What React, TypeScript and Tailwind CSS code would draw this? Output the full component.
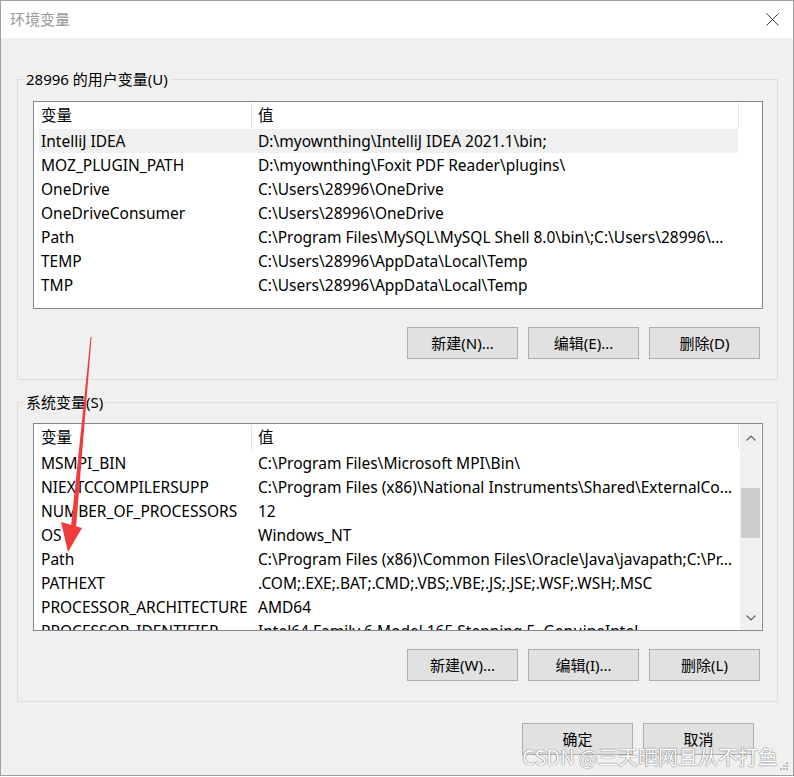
import React from 'react';

type Row = [string, string];

const userVars: Row[] = [
  ['IntelliJ IDEA', 'D:\\myownthing\\IntelliJ IDEA 2021.1\\bin;'],
  ['MOZ_PLUGIN_PATH', 'D:\\myownthing\\Foxit PDF Reader\\plugins\\'],
  ['OneDrive', 'C:\\Users\\28996\\OneDrive'],
  ['OneDriveConsumer', 'C:\\Users\\28996\\OneDrive'],
  ['Path', 'C:\\Program Files\\MySQL\\MySQL Shell 8.0\\bin\\;C:\\Users\\28996\\...'],
  ['TEMP', 'C:\\Users\\28996\\AppData\\Local\\Temp'],
  ['TMP', 'C:\\Users\\28996\\AppData\\Local\\Temp'],
];

const systemVars: Row[] = [
  ['MSMPI_BIN', 'C:\\Program Files\\Microsoft MPI\\Bin\\'],
  ['NIEXTCCOMPILERSUPP', 'C:\\Program Files (x86)\\National Instruments\\Shared\\ExternalCo...'],
  ['NUMBER_OF_PROCESSORS', '12'],
  ['OS', 'Windows_NT'],
  ['Path', 'C:\\Program Files (x86)\\Common Files\\Oracle\\Java\\javapath;C:\\Pr...'],
  ['PATHEXT', '.COM;.EXE;.BAT;.CMD;.VBS;.VBE;.JS;.JSE;.WSF;.WSH;.MSC'],
  ['PROCESSOR_ARCHITECTURE', 'AMD64'],
  ['PROCESSOR_IDENTIFIER', 'Intel64 Family 6 Model 165 Stepping 5, GenuineIntel'],
];

const Chevron = ({ up }: { up?: boolean }) => (
  <svg width="10" height="6" viewBox="0 0 10 6" className="block">
    <polyline
      points={up ? '0.5,5.5 5,1 9.5,5.5' : '0.5,0.5 5,5 9.5,0.5'}
      fill="none"
      stroke="#606060"
      strokeWidth="1.2"
    />
  </svg>
);

// list view with header, optional scrollbar on the right
const VarList = ({ rows, selected, scroll }: { rows: Row[]; selected?: number; scroll?: boolean }) => (
  <div className="flex h-[208px] w-[730px] border border-[#828790] bg-white overflow-hidden text-[15.5px]">
    <div className="w-[705px] flex flex-col">
      <div className="flex h-[27px] shrink-0 items-center">
        <div className="w-[218px] h-[25px] pl-[7px] border-r border-[#e5e5e5] leading-[25px]">变量</div>
        <div className="w-[487px] h-[25px] pl-[6px] border-r border-[#e5e5e5] leading-[25px]">值</div>
      </div>
      {rows.map(([name, value], i) => (
        <div
          key={name}
          className={`flex h-[24px] shrink-0 ml-[5px] w-[699px] leading-[24px] whitespace-nowrap ${i === selected ? 'bg-[#f0f0f0]' : ''}`}
        >
          <div className="w-[212px] pl-[2px] overflow-hidden">{name}</div>
          <div className="w-[487px] pl-[7px] overflow-hidden">{value}</div>
        </div>
      ))}
    </div>
    {scroll && (
      <div className="w-[21px] ml-[1px] flex flex-col items-center bg-[#f0f0f0]">
        <div className="h-[27px] flex items-center justify-center">
          <Chevron up />
        </div>
        <div className="w-[19px] h-[50px] mt-[37px] bg-[#cdcdcd]" />
        <div className="flex-1" />
        <div className="h-[24px] flex items-center justify-center">
          <Chevron />
        </div>
      </div>
    )}
  </div>
);

const Btn = ({ label }: { label: string }) => (
  <button className="w-[111px] h-[32px] bg-[#e1e1e1] border border-[#adadad] text-[15px] text-black">{label}</button>
);

const Group = ({ title, children }: { title: string; children: React.ReactNode }) => (
  <fieldset className="border border-[#dcdcdc] min-w-0 pl-[15px] pr-[13px] pt-[12px] pb-[20px]">
    <legend className="ml-[-9px] px-[2px] leading-[20px] text-[15px]">{title}</legend>
    {children}
  </fieldset>
);

export default function App() {
  return (
    <div
      className="relative w-[794px] h-[776px] flex flex-col border border-[#a0a0a0] text-[15px] text-black"
      style={{ fontFamily: '"Noto Sans", "Noto Sans CJK SC", sans-serif' }}
    >
      <div className="h-[37px] shrink-0 bg-white flex items-center justify-between pl-[9px] pr-[14px]">
        <span className="text-[#999999] text-[15px]">环境变量</span>
        <svg width="13" height="13" viewBox="0 0 13 13">
          <path d="M0.5 0.5 L12.5 12.5 M12.5 0.5 L0.5 12.5" stroke="#3c3c3c" strokeWidth="1" fill="none" />
        </svg>
      </div>

      <div className="flex-1 bg-[#f0f0f0] pl-[16px] pr-[15px] pt-[31px] flex flex-col">
        <Group title="28996 的用户变量(U)">
          <VarList rows={userVars} selected={0} />
          <div className="flex justify-end gap-[10px] mt-[18px] pr-[4px]">
            <Btn label="新建(N)..." />
            <Btn label="编辑(E)..." />
            <Btn label="删除(D)" />
          </div>
        </Group>

        <div className="mt-[12px]">
          <Group title="系统变量(S)">
            <div className="-mt-[1px]">
              <VarList rows={systemVars} scroll />
            </div>
            <div className="flex justify-end gap-[10px] mt-[18px] pr-[4px]">
              <Btn label="新建(W)..." />
              <Btn label="编辑(I)..." />
              <Btn label="删除(L)" />
            </div>
          </Group>
        </div>

        <div className="flex justify-end gap-[10px] mt-[21px] pr-[24px]">
          <Btn label="确定" />
          <Btn label="取消" />
        </div>
      </div>

      {/* red annotation arrow */}
      <svg className="absolute inset-0 pointer-events-none" width="794" height="776" viewBox="0 0 794 776">
        <polygon points="89.6,336 90.6,336 75,527 70,526" fill="#f03c3c" />
        <polygon points="60,521 81,527 67,551" fill="#f03c3c" />
      </svg>

      {/* watermark */}
      <div
        className="absolute right-[15px] bottom-[7px] text-[20px] leading-[22px] text-white whitespace-nowrap [text-shadow:0_0_1px_#666,0_0_1px_#666]"
        style={{ fontFamily: '"Noto Sans CJK SC", sans-serif' }}
      >
        CSDN @三天晒网且从不打鱼
      </div>
      <svg className="absolute right-[4px] bottom-[4px]" width="10" height="10" viewBox="0 0 10 10">
        <rect x="7" y="1" width="2" height="2" fill="#bcbcbc" />
        <rect x="4" y="4" width="2" height="2" fill="#bcbcbc" />
        <rect x="7" y="4" width="2" height="2" fill="#bcbcbc" />
        <rect x="1" y="7" width="2" height="2" fill="#bcbcbc" />
        <rect x="4" y="7" width="2" height="2" fill="#bcbcbc" />
        <rect x="7" y="7" width="2" height="2" fill="#bcbcbc" />
      </svg>
    </div>
  );
}
